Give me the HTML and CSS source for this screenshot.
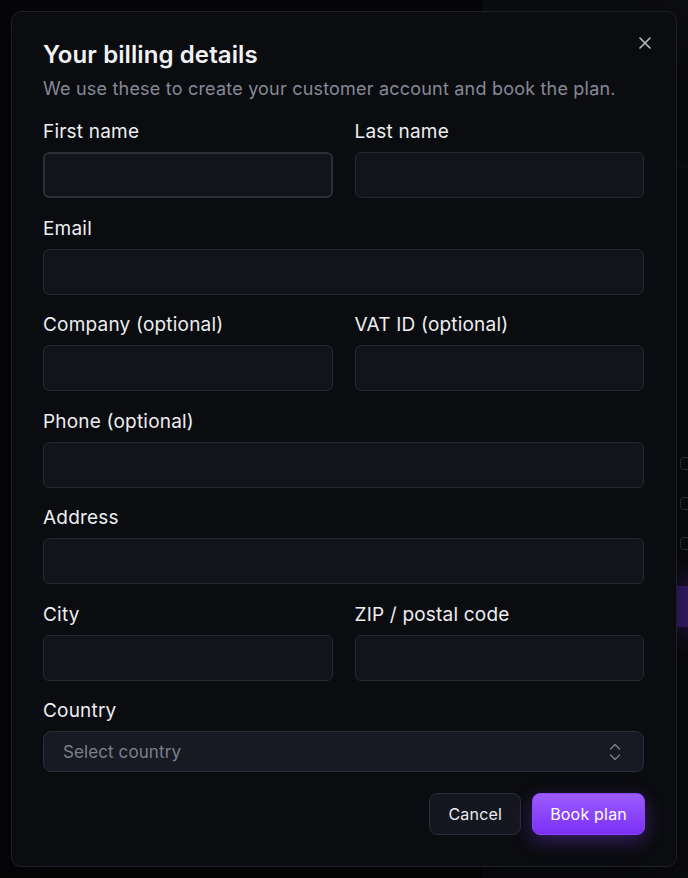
FILE: index.html
```html
<!DOCTYPE html>
<html lang="en">
<head>
<meta charset="utf-8">
<title>Your billing details</title>
<link rel="stylesheet" href="styles.css">
</head>
<body>
<div class="backdrop" aria-hidden="true">
  <div class="bg-panel">
    <div class="bg-rule"></div>
    <span class="bg-icon bg-icon-1"></span>
    <span class="bg-icon bg-icon-2"></span>
    <span class="bg-icon bg-icon-3"></span>
    <div class="bg-button"></div>
  </div>
</div>
<div class="overlay">
  <div class="dialog" role="dialog" aria-labelledby="dlg-title">
    <button class="close" aria-label="Close">
      <svg width="12" height="12" viewBox="0 0 12 12" fill="none" stroke="currentColor" stroke-width="1.6" stroke-linecap="round"><path d="M1 1L11 11M11 1L1 11"/></svg>
    </button>
    <h2 class="title" id="dlg-title">Your billing details</h2>
    <p class="subtitle">We use these to create your customer account and book the plan.</p>
    <form class="form">
      <div class="row two">
        <label class="field"><span class="label">First name</span><input class="input focused" type="text"></label>
        <label class="field"><span class="label">Last name</span><input class="input" type="text"></label>
      </div>
      <label class="field"><span class="label">Email</span><input class="input" type="email"></label>
      <div class="row two">
        <label class="field"><span class="label">Company (optional)</span><input class="input" type="text"></label>
        <label class="field"><span class="label">VAT ID (optional)</span><input class="input" type="text"></label>
      </div>
      <label class="field"><span class="label">Phone (optional)</span><input class="input" type="tel"></label>
      <label class="field"><span class="label">Address</span><input class="input" type="text"></label>
      <div class="row two">
        <label class="field"><span class="label">City</span><input class="input" type="text"></label>
        <label class="field"><span class="label">ZIP / postal code</span><input class="input" type="text"></label>
      </div>
      <div class="field">
        <span class="label">Country</span>
        <div class="select">
          <span class="placeholder">Select country</span>
          <svg class="chevrons" width="12" height="18" viewBox="0 0 12 18" fill="none" stroke="currentColor" stroke-width="1.5" stroke-linecap="round" stroke-linejoin="round"><path d="M1.5 6L6 1.5L10.5 6"/><path d="M1.5 12L6 16.5L10.5 12"/></svg>
        </div>
      </div>
      <div class="actions">
        <button type="button" class="btn btn-secondary">Cancel</button>
        <button type="button" class="btn btn-primary">Book plan</button>
      </div>
    </form>
  </div>
</div>
</body>
</html>
```

FILE: styles.css
```css
* { box-sizing: border-box; }

html, body {
  margin: 0;
  padding: 0;
  width: 688px;
  height: 878px;
  overflow: hidden;
  background: #060608;
  font-family: Inter, "Noto Sans", sans-serif;
}

.backdrop {
  position: absolute;
  inset: 0;
  z-index: 0;
}

.bg-panel {
  position: absolute;
  left: 482px;
  top: 0;
  right: 0;
  bottom: 0;
  background: #0c0d10;
}

.bg-rule {
  position: absolute;
  left: 0;
  right: 0;
  top: 166px;
  height: 1px;
  background: #15161a;
}

.bg-icon {
  position: absolute;
  left: 198px;
  width: 12px;
  height: 13px;
  border: 1.5px solid #34363c;
  border-radius: 4px;
}
.bg-icon-1 { top: 457px; }
.bg-icon-2 { top: 497px; }
.bg-icon-3 { top: 537px; }

.bg-button {
  position: absolute;
  left: 190px;
  width: 40px;
  top: 586px;
  height: 41px;
  background: #3b1f73;
  box-shadow: 0 0 24px 6px rgba(70, 30, 140, 0.45);
}

.overlay {
  position: relative;
  z-index: 1;
  width: 688px;
  height: 878px;
  padding: 11px;
}

.dialog {
  position: relative;
  width: 666px;
  height: 856px;
  background: #0b0c10;
  border: 1px solid #1e2026;
  border-radius: 10px;
  padding: 27px 32px 31px 31px;
  box-shadow: 0 20px 60px rgba(0, 0, 0, 0.6);
}

.close {
  position: absolute;
  top: 19px;
  right: 19px;
  width: 24px;
  height: 24px;
  padding: 0;
  border: 0;
  background: transparent;
  color: #b9bbc2;
  display: flex;
  align-items: center;
  justify-content: center;
  cursor: pointer;
}

.title {
  margin: 0;
  font-size: 24px;
  line-height: 32px;
  font-weight: 600;
  color: #f1f2f4;
  letter-spacing: 0.1px;
}

.subtitle {
  margin: 4px 0 0;
  font-size: 18px;
  line-height: 28px;
  color: #868996;
  letter-spacing: 0.2px;
}

.form {
  margin-top: 17px;
  display: flex;
  flex-direction: column;
  gap: 18.5px;
}

.row.two {
  display: grid;
  grid-template-columns: 1fr 1fr;
  column-gap: 22px;
}

.field {
  display: flex;
  flex-direction: column;
  gap: 8px;
}

.label {
  font-size: 19px;
  line-height: 24px;
  font-weight: 400;
  color: #eceef1;
  letter-spacing: 0.2px;
}

.input {
  height: 46px;
  width: 100%;
  background: #12141b;
  border: 1px solid #252831;
  border-radius: 6px;
  color: #e7e8eb;
  font: inherit;
  padding: 0 14px;
  outline: none;
}

.input.focused {
  border: 2px solid #2b2e36;
}

.select {
  height: 41px;
  background: #171923;
  border: 1px solid #2b2e39;
  border-radius: 8px;
  display: flex;
  align-items: center;
  justify-content: space-between;
  padding: 0 22px 0 19px;
}

.placeholder {
  font-size: 17px;
  color: #7d808c;
  letter-spacing: 0.1px;
}

.chevrons {
  color: #767985;
}

.actions {
  margin-top: 2px;
  margin-right: -1px;
  display: flex;
  justify-content: flex-end;
  gap: 11px;
}

.btn {
  height: 42px;
  border-radius: 8px;
  font-family: inherit;
  font-size: 16px;
  font-weight: 400;
  letter-spacing: 0.2px;
  cursor: pointer;
}

.btn-secondary {
  padding: 0 18px;
  background: #151720;
  border: 1px solid #292c36;
  color: #e9eaee;
}

.btn-primary {
  padding: 0 17px;
  background: linear-gradient(180deg, #9c5cff 0%, #7b2ff6 100%);
  border: 1px solid #8b47fb;
  color: #ffffff;
  box-shadow: 0 6px 18px rgba(124, 58, 237, 0.38);
}
```
